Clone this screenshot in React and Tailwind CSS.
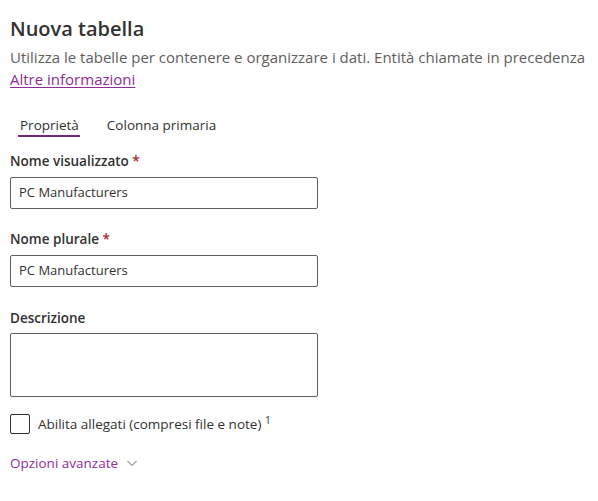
import React from "react";

export default function App() {
  const font = { fontFamily: '"Open Sans", "Noto Sans", sans-serif' };
  return (
    <div className="w-[598px] h-[501px] bg-white overflow-hidden pl-[10px] pt-[15px] text-[#323130]" style={font}>
      <h1 className="text-[20px] leading-[28px] font-semibold text-[#323130]">Nuova tabella</h1>
      <p className="mt-[3px] text-[15px] leading-[22px] text-[#605e5c] whitespace-nowrap">
        Utilizza le tabelle per contenere e organizzare i dati. Entità chiamate in precedenza
      </p>
      <a href="#" className="block text-[15px] leading-[22px] text-[#8f2d96] underline underline-offset-2 w-max">
        Altre informazioni
      </a>
      <div className="mt-[25px] flex gap-[28px] pl-[10px] h-[20px]">
        <div className="relative text-[13.5px] leading-[20px] text-[#323130]">
          Proprietà
          <div className="absolute left-[-2px] right-[-1px] bottom-[-2px] h-[2px] bg-[#742774]" />
        </div>
        <div className="text-[13.5px] leading-[20px] text-[#323130]">Colonna primaria</div>
      </div>

      <label className="block mt-[16px] text-[13.5px] leading-[20px] font-semibold text-[#323130]">
        Nome visualizzato <span className="text-[#a4262c]">*</span>
      </label>
      <div className="mt-[6px] w-[308px] h-[32px] border border-[#605e5c] rounded-[2px] flex items-center px-[8px] text-[13px] text-[#323130]">
        PC Manufacturers
      </div>

      <label className="block mt-[20px] text-[13.5px] leading-[20px] font-semibold text-[#323130]">
        Nome plurale <span className="text-[#a4262c]">*</span>
      </label>
      <div className="mt-[6px] w-[308px] h-[32px] border border-[#605e5c] rounded-[2px] flex items-center px-[8px] text-[13px] text-[#323130]">
        PC Manufacturers
      </div>

      <label className="block mt-[21px] text-[13.5px] leading-[20px] font-semibold text-[#323130]">
        Descrizione
      </label>
      <div className="mt-[5px] w-[308px] h-[64px] border border-[#605e5c] rounded-[2px]" />

      <div className="mt-[17px] flex items-center gap-[8px]">
        <div className="w-[20px] h-[20px] border border-[#323130] rounded-[2px]" />
        <span className="text-[13.5px] leading-[20px] text-[#323130]">
          Abilita allegati (compresi file e note) <sup className="text-[10px]">1</sup>
        </span>
      </div>

      <div className="mt-[19px] flex items-center gap-[8px] text-[13.5px] leading-[20px] text-[#8f2d96]">
        <span>Opzioni avanzate</span>
        <svg width="12" height="12" viewBox="0 0 12 12" fill="none">
          <path d="M1.5 4 L6 8.5 L10.5 4" stroke="#605e5c" strokeWidth="1" />
        </svg>
      </div>
    </div>
  );
}
